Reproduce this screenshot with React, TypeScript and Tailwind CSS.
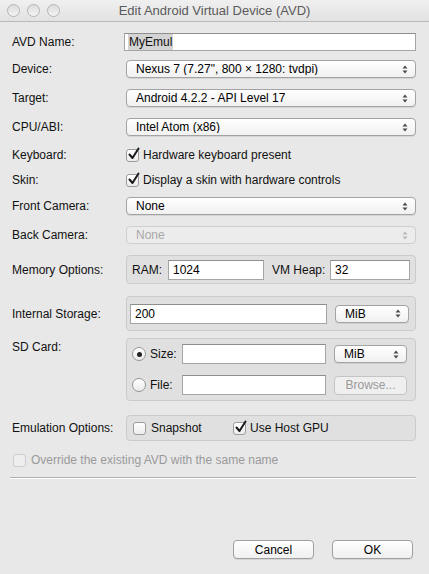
import React from "react";

const font = { fontFamily: '"Liberation Sans", Arial, sans-serif' };

function Arrows({ disabled = false }: { disabled?: boolean }) {
  const c = disabled ? "#b8b8b8" : "#4a4a4a";
  return (
    <svg width="6" height="9" viewBox="0 0 6 9" className="shrink-0">
      <path d="M3 0.5 L5.5 3.5 H0.5 Z" fill={c} />
      <path d="M3 8.5 L5.5 5.5 H0.5 Z" fill={c} />
    </svg>
  );
}

function Select({
  value,
  disabled = false,
  className = "",
}: {
  value: string;
  disabled?: boolean;
  className?: string;
}) {
  return (
    <div
      className={`flex h-[18px] items-center justify-between rounded-[4px] border pl-[9px] pr-[7px] ${
        disabled
          ? "border-[#cfcfcf] bg-[#ececec] text-[#a8a8a8]"
          : "border-[#a3a3a3] bg-gradient-to-b from-white to-[#f1f1f1] text-black shadow-[0_1px_0_rgba(0,0,0,0.08)]"
      } ${className}`}
    >
      <span className="truncate leading-none">{value}</span>
      <Arrows disabled={disabled} />
    </div>
  );
}

function Field({ value = "", className = "" }: { value?: string; className?: string }) {
  return (
    <div
      className={`flex h-[20px] items-center border border-[#a5a5a5] border-t-[#8e8e8e] bg-white px-[4px] leading-none text-black ${className}`}
    >
      {value}
    </div>
  );
}

function Check({ checked = false, disabled = false }: { checked?: boolean; disabled?: boolean }) {
  return (
    <div
      className={`relative h-[13px] w-[13px] shrink-0 rounded-[3px] border ${
        disabled
          ? "border-[#cdcdcd] bg-[#eeeeee]"
          : "border-[#9c9c9c] bg-gradient-to-b from-white to-[#ececec]"
      }`}
    >
      {checked && (
        <svg
          width="14"
          height="14"
          viewBox="0 0 14 14"
          className="absolute left-[0px] top-[-3px]"
        >
          <path
            d="M2.5 7.5 L5.5 11 L11.5 1.5"
            fill="none"
            stroke="#1a1a1a"
            strokeWidth="2"
            strokeLinecap="round"
            strokeLinejoin="round"
          />
        </svg>
      )}
    </div>
  );
}

function Radio({ on = false }: { on?: boolean }) {
  return (
    <div className="flex h-[14px] w-[14px] shrink-0 items-center justify-center rounded-full border border-[#959595] bg-gradient-to-b from-white to-[#ebebeb]">
      {on && <div className="h-[5px] w-[5px] rounded-full bg-[#222]" />}
    </div>
  );
}

function Button({ label, disabled = false, className = "" }: { label: string; disabled?: boolean; className?: string }) {
  return (
    <div
      className={`flex h-[19px] items-center justify-center rounded-[4px] border leading-none ${
        disabled
          ? "border-[#c4c4c4] bg-[#efefef] text-[#9a9a9a]"
          : "border-[#a0a0a0] bg-gradient-to-b from-white to-[#f0f0f0] text-black shadow-[0_1px_0_rgba(0,0,0,0.08)]"
      } ${className}`}
    >
      {label}
    </div>
  );
}

function Row({
  label,
  children,
  className = "",
  alignTop = false,
}: {
  label: string;
  children: React.ReactNode;
  className?: string;
  alignTop?: boolean;
}) {
  return (
    <div className={`flex ${alignTop ? "items-start" : "items-center"} ${className}`}>
      <div className="w-[114px] shrink-0">{label}</div>
      <div className="flex-1">{children}</div>
    </div>
  );
}

function Group({ children, className = "" }: { children: React.ReactNode; className?: string }) {
  return (
    <div className={`rounded-[4px] border border-[#cbcbcb] bg-[#e0e0e0] ${className}`}>
      {children}
    </div>
  );
}

function Light() {
  return (
    <div className="h-[13px] w-[13px] rounded-full border border-[#b4b4b4] bg-gradient-to-b from-[#dcdcdc] to-[#f4f4f4]" />
  );
}

export default function App() {
  return (
    <div
      className="relative h-[574px] w-[429px] overflow-hidden bg-[#e8e8e8] text-[12px] text-[#111]"
      style={font}
    >
      {/* title bar */}
      <div className="relative flex h-[22px] items-center justify-center border-b border-[#b9b9b9] bg-gradient-to-b from-[#f0f0f0] to-[#e2e2e2]">
        <div className="absolute left-[7px] top-[4px] flex gap-[7px]">
          <Light />
          <Light />
          <Light />
        </div>
        <span className="text-[13px] text-[#5a5a5a]">Edit Android Virtual Device (AVD)</span>
      </div>

      <div className="pl-[12px] pr-[13px]">
        <Row label="AVD Name:" className="mt-[10px] h-[19px]">
          <div className="-ml-[2px] flex h-[18px] items-center border border-[#a5a5a5] border-t-[#8e8e8e] bg-white px-[3px] leading-none">
            <span className="bg-[#d4d4d4] px-[1px] py-[2px]">MyEmul</span>
          </div>
        </Row>

        <Row label="Device:" className="mt-[8px] h-[20px]">
          <Select value={'Nexus 7 (7.27", 800 × 1280: tvdpi)'} />
        </Row>
        <Row label="Target:" className="mt-[9px] h-[20px]">
          <Select value="Android 4.2.2 - API Level 17" />
        </Row>
        <Row label="CPU/ABI:" className="mt-[9px] h-[20px]">
          <Select value="Intel Atom (x86)" />
        </Row>

        <Row label="Keyboard:" className="mt-[9px] h-[18px]">
          <div className="flex items-center gap-[4px]">
            <Check checked />
            <span>Hardware keyboard present</span>
          </div>
        </Row>
        <Row label="Skin:" className="mt-[7px] h-[18px]">
          <div className="flex items-center gap-[4px]">
            <Check checked />
            <span>Display a skin with hardware controls</span>
          </div>
        </Row>

        <Row label="Front Camera:" className="mt-[7px] h-[20px]">
          <Select value="None" />
        </Row>
        <Row label="Back Camera:" className="mt-[9px] h-[20px]">
          <Select value="None" disabled />
        </Row>

        <Row label="Memory Options:" className="mt-[10px]">
          <Group className="flex h-[29px] items-center px-[5px]">
            <span className="w-[36px]">RAM:</span>
            <Field value="1024" className="w-[96px]" />
            <span className="ml-[8px] w-[58px]">VM Heap:</span>
            <Field value="32" className="flex-1" />
          </Group>
        </Row>

        <Row label="Internal Storage:" className="mt-[12px]">
          <Group className="flex h-[35px] items-center pl-[3px] pr-[6px]">
            <Field value="200" className="w-[197px]" />
            <Select value="MiB" className="ml-[8px] flex-1" />
          </Group>
        </Row>

        <Row label="SD Card:" className="mt-[7px]" alignTop>
          <Group className="flex h-[63px] flex-col justify-center gap-[11px] pl-[5px] pr-[8px]">
            <div className="flex items-center">
              <Radio on />
              <span className="ml-[4px] w-[32px]">Size:</span>
              <Field className="w-[144px]" />
              <Select value="MiB" className="ml-[8px] flex-1" />
            </div>
            <div className="flex items-center">
              <Radio />
              <span className="ml-[4px] w-[32px]">File:</span>
              <Field className="w-[144px]" />
              <Button label="Browse..." disabled className="ml-[8px] flex-1" />
            </div>
          </Group>
        </Row>

        <Row label="Emulation Options:" className="mt-[14px]">
          <Group className="flex h-[26px] items-center pl-[6px]">
            <Check />
            <span className="ml-[5px] w-[82px]">Snapshot</span>
            <Check checked />
            <span className="ml-[4px]">Use Host GPU</span>
          </Group>
        </Row>

        <div className="mt-[11px] flex h-[16px] items-center gap-[5px] pl-[1px] text-[#9a9a9a]">
          <Check disabled />
          <span>Override the existing AVD with the same name</span>
        </div>

        <div className="ml-[-2px] mt-[9px] h-[2px] border-t border-[#b0b0b0] bg-transparent">
          <div className="h-[1px] bg-white" />
        </div>

        <div className="mt-[61px] flex justify-end gap-[18px] pr-[3px]">
          <Button label="Cancel" className="w-[81px]" />
          <Button label="OK" className="w-[81px]" />
        </div>
      </div>
    </div>
  );
}
